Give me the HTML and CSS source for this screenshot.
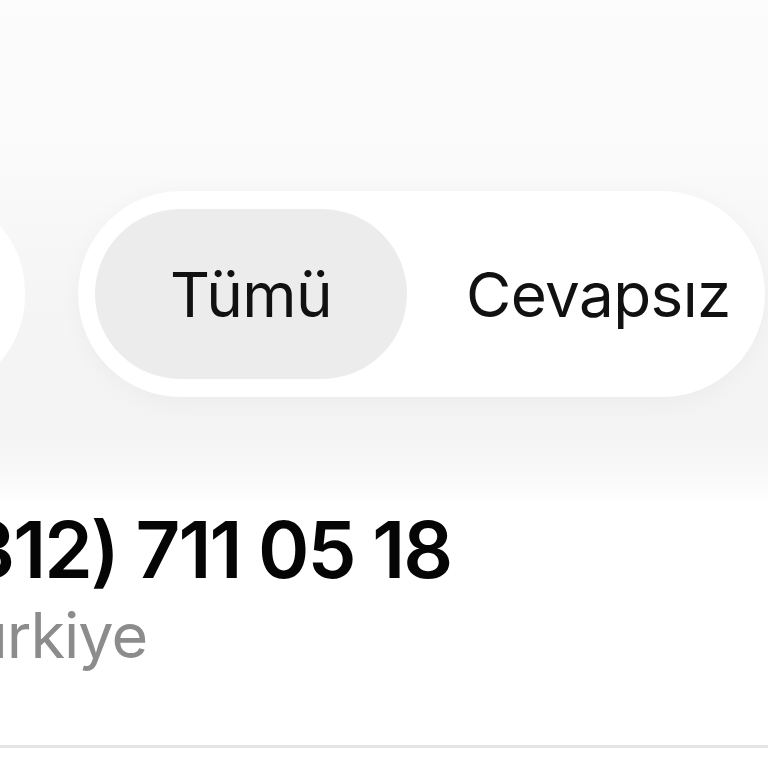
FILE: index.html
```html
<!DOCTYPE html>
<html lang="tr">
<head>
<meta charset="utf-8">
<link rel="stylesheet" href="styles.css">
</head>
<body>
  <div class="filters">
    <div class="side-pill"></div>
    <div class="segmented">
      <div class="seg seg-active">Tümü</div>
      <div class="seg seg-plain">Cevapsız</div>
    </div>
  </div>
  <div class="entry">
    <div class="number">(0312) 711 05 18</div>
    <div class="place">Türkiye</div>
  </div>
</body>
</html>
```
FILE: styles.css
```css
html, body {
  margin: 0;
  padding: 0;
}
body {
  width: 768px;
  height: 768px;
  overflow: hidden;
  font-family: Inter, "Noto Sans", sans-serif;
  background: linear-gradient(#fcfcfc 0px, #fafafa 150px, #f5f5f5 300px, #f3f3f3 420px, #f8f8f8 470px, #ffffff 505px);
}
.filters {
  display: flex;
  align-items: center;
  gap: 53px;
  padding-top: 191px;
  height: 206px;
}
.side-pill {
  flex: none;
  width: 200px;
  height: 204px;
  margin-left: -175px;
  border-radius: 102px;
  background: #ffffff;
}
.segmented {
  flex: none;
  display: flex;
  align-items: center;
  height: 206px;
  padding: 0 18px 0 17px;
  box-sizing: border-box;
  border-radius: 103px;
  background: #ffffff;
  box-shadow: 0 4px 24px rgba(0,0,0,0.035);
}
.seg {
  height: 170px;
  display: flex;
  align-items: center;
  justify-content: center;
  font-size: 62px;
  font-weight: 400;
  letter-spacing: -0.6px;
  color: #111;
  border-radius: 85px;
}
.seg-plain {
  padding: 0 16px 0 59px;
}
.seg-active {
  width: 312px;
  box-sizing: border-box;
  padding: 0;
  background: #ececec;
}
.entry {
  height: 351px;
  border-bottom: 3px solid #e5e5e5;
  box-sizing: border-box;
  padding-top: 108px;
}
.number {
  margin-left: -111px;
  font-size: 78px;
  font-weight: 600;
  letter-spacing: -2px;
  line-height: 90px;
  color: #050505;
  white-space: nowrap;
}
.place {
  margin-left: -66px;
  font-size: 63px;
  letter-spacing: -1px;
  line-height: 80px;
  color: #8c8c8c;
  white-space: nowrap;
}
```
